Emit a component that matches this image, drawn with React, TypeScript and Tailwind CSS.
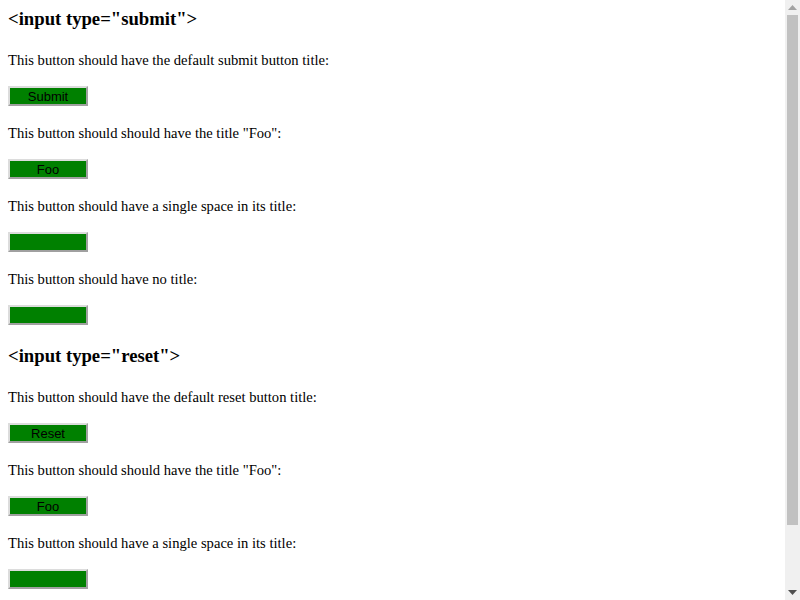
import React from "react";

const serif = { fontFamily: '"Liberation Serif", "Times New Roman", serif' };

function Btn({ label }: { label: string }) {
  return (
    <div
      className="w-[80px] h-[20px] bg-[#008000] border-2 border-t-[#dcdcdc] border-l-[#dcdcdc] border-r-[#a0a0a0] border-b-[#a0a0a0] flex items-center justify-center pt-[1px] text-[13px] leading-[16px] text-black"
      style={{ fontFamily: '"Liberation Sans", Arial, sans-serif' }}
    >
      {label}
    </div>
  );
}

function Item({ text, label, first }: { text: string; label: string; first?: boolean }) {
  return (
    <div className={first ? "mt-[21px]" : "mt-[18px]"}>
      <p className="h-[19px] text-[14.6px] leading-[19px] whitespace-nowrap">{text}</p>
      <div className="mt-[16px]">
        <Btn label={label} />
      </div>
    </div>
  );
}

function Heading({ text }: { text: string }) {
  return <h3 className="h-[22px] text-[18.7px] leading-[22px] font-bold whitespace-nowrap">{text}</h3>;
}

export default function App() {
  return (
    <div className="w-[800px] h-[600px] overflow-hidden flex bg-white text-black" style={serif}>
      <div className="flex-1 pl-[8px] pt-[8px]">
        <Heading text={'<input type="submit">'} />
        <Item first text="This button should have the default submit button title:" label="Submit" />
        <Item text={'This button should should have the title "Foo":'} label="Foo" />
        <Item text="This button should have a single space in its title:" label=" " />
        <Item text="This button should have no title:" label="" />
        <div className="mt-[20px]">
          <Heading text={'<input type="reset">'} />
        </div>
        <Item first text="This button should have the default reset button title:" label="Reset" />
        <Item text={'This button should should have the title "Foo":'} label="Foo" />
        <Item text="This button should have a single space in its title:" label=" " />
      </div>
      <div className="w-[15px] h-[600px] bg-[#f0f0f0] flex flex-col items-center">
        <div className="h-[15px] w-full flex items-center justify-center">
          <svg width="9" height="5" viewBox="0 0 9 5">
            <polygon points="0,5 9,5 4.5,0" fill="#a3a3a3" />
          </svg>
        </div>
        <div className="w-[11px] h-[510px] bg-[#c1c1c1]" />
        <div className="flex-1" />
        <div className="h-[15px] w-full flex items-center justify-center">
          <svg width="9" height="5" viewBox="0 0 9 5">
            <polygon points="0,0 9,0 4.5,5" fill="#505050" />
          </svg>
        </div>
      </div>
    </div>
  );
}
